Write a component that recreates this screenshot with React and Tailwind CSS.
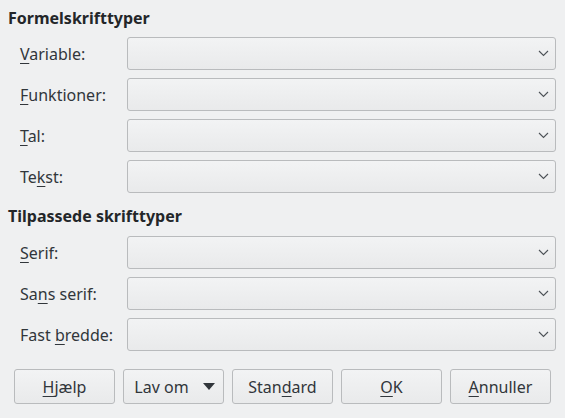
import React from 'react';

const Chevron = () => (
  <svg width="11" height="7" viewBox="0 0 11 7" className="shrink-0">
    <path d="M1 1 L5.5 5.5 L10 1" fill="none" stroke="#4d5257" strokeWidth="1.1" />
  </svg>
);

const Key = ({ children }) => <span className="underline underline-offset-[3px] decoration-1">{children}</span>;

const Combo = () => (
  <div className="flex h-[33px] w-[429px] items-center justify-end rounded-[3px] border border-[#b9bbbd] bg-gradient-to-b from-[#f2f3f4] to-[#e9eaeb] pr-[6px]">
    <Chevron />
  </div>
);

const Row = ({ label }) => (
  <div className="flex items-center">
    <div className="w-[119px] pl-[12px]">{label}</div>
    <Combo />
  </div>
);

const Button = ({ children }) => (
  <button
    type="button"
    className="flex h-[35px] w-[101px] items-center justify-center rounded-[3px] border border-[#b9bbbd] bg-gradient-to-b from-[#f2f3f4] to-[#e9eaeb] text-[#31363b]"
  >
    {children}
  </button>
);

export default function App() {
  return (
    <div
      className="h-[418px] w-[565px] bg-[#eff0f1] px-[8px] text-[16px] text-[#31363b]"
      style={{ fontFamily: '"Noto Sans", sans-serif' }}
    >
      <h1 className="pt-[8px] text-[16px] font-bold leading-[20px] text-[#232629]">Formelskrifttyper</h1>
      <div className="mt-[9px] flex flex-col gap-[8px]">
        <Row label={<><Key>V</Key>ariable:</>} />
        <Row label={<><Key>F</Key>unktioner:</>} />
        <Row label={<><Key>T</Key>al:</>} />
        <Row label={<>Te<Key>k</Key>st:</>} />
      </div>
      <h2 className="mt-[13px] text-[16px] font-bold leading-[20px] text-[#232629]">Tilpassede skrifttyper</h2>
      <div className="mt-[10px] flex flex-col gap-[8px]">
        <Row label={<><Key>S</Key>erif:</>} />
        <Row label={<>Sa<Key>n</Key>s serif:</>} />
        <Row label={<>Fast <Key>b</Key>redde:</>} />
      </div>
      <div className="mt-[18px] flex gap-[8px] pl-[6px]">
        <Button><Key>H</Key>jælp</Button>
        <Button>
          <span className="flex items-center gap-[14px] pl-[2px]">
            Lav om
            <svg width="12" height="7" viewBox="0 0 12 7">
              <path d="M0 0 H12 L6 7 Z" fill="#31363b" />
            </svg>
          </span>
        </Button>
        <Button>Stan<Key>d</Key>ard</Button>
        <Button><Key>O</Key>K</Button>
        <Button><Key>A</Key>nnuller</Button>
      </div>
    </div>
  );
}
